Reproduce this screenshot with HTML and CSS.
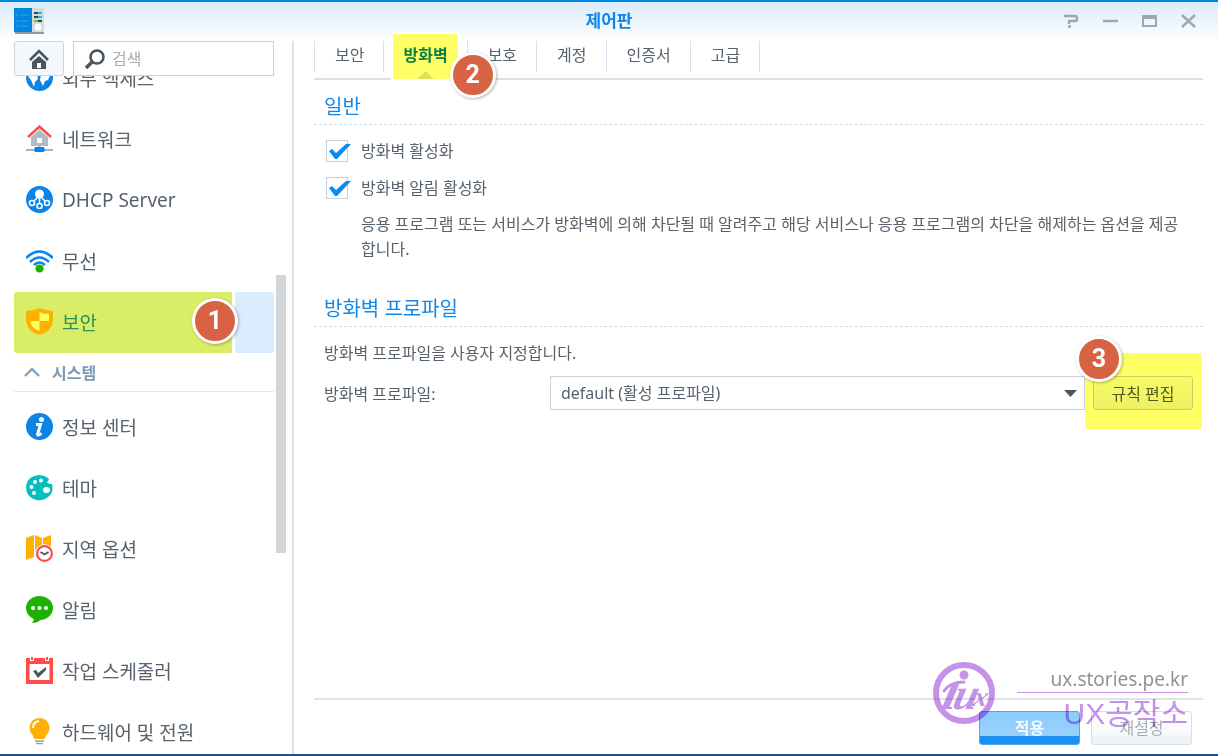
FILE: index.html
```
<!DOCTYPE html>
<html lang="ko">
<head>
    <meta charset="UTF-8">
    <meta name="viewport" content="width=device-width, initial-scale=1.0">
    <title>제어판</title>
    <link rel="stylesheet" href="styles.css">
</head>
<body>

    <div class="window">
        <header class="titlebar">
            <svg class="app-icon" width="30" height="26" viewBox="0 0 30 26">
                <rect x="1" y="2" width="29" height="24" fill="#8d99a3"/>
                <rect x="17" y="0" width="13" height="24" fill="#d3dbe1"/>
                <rect width="18" height="24" fill="#0784e0"/>
                <path d="M2 7h2M6 7h9M2 13h2M6 13h9M2 18h2M6 18h9" stroke="#10b4f5"/>
                <path d="M20 5h4M20 9h4" stroke="#37424b" stroke-width="2"/>
                <path d="M24 5h4M24 9h4" stroke="#1fb5e8" stroke-width="2"/>
                <path d="M20 13h4" stroke="#6ad000" stroke-width="2"/>
                <path d="M24 13h4" stroke="#37424b" stroke-width="2"/>
                <circle cx="24" cy="19" r="3.5" fill="#f5ffff"/>
            </svg>
            <h1>제어판</h1>
            <div class="window-buttons">
                <button type="button" aria-label="도움말">
                    <svg width="15" height="14" viewBox="0 0 15 14" fill="none" stroke="#9ca7b0" stroke-width="2.4"><path d="M0 2h11q2 0 2 2v1q0 2-2 2H5v3M4 12.500h3"/></svg>
                </button>
                <button type="button" aria-label="최소화">
                    <svg width="15" height="14" viewBox="0 0 15 14" stroke="#9ca7b0" stroke-width="2.4"><path d="M0 7h15"/></svg>
                </button>
                <button type="button" aria-label="최대화">
                    <svg width="15" height="14" viewBox="0 0 15 14" fill="none" stroke="#9ca7b0" stroke-width="2"><path d="M1 2h13v10H1z"/><path d="M0 3h15" stroke-width="4"/></svg>
                </button>
                <button type="button" aria-label="닫기">
                    <svg width="15" height="14" viewBox="0 0 15 14" stroke="#9ca7b0" stroke-width="2.4"><path d="M1 1l13 12M14 1L1 13"/></svg>
                </button>
            </div>
        </header>

        <div class="body">
            <aside class="sidebar">
                <div class="toolbar">
                    <button class="home-btn" type="button" aria-label="홈">
                        <svg width="20" height="20" viewBox="0 0 20 20"><path d="M3 13l7-6 7 6v7H3z" fill="#4a555f"/><path d="M8 14h4v5H8z" fill="#fff"/><path d="M1 11l9-9 9 9" fill="none" stroke="#4a555f" stroke-width="2.6"/></svg>
                    </button>
                    <label class="search">
                        <svg width="20" height="20" viewBox="0 0 20 20" fill="none" stroke="#4a555f"><circle cx="12" cy="8" r="6.5" stroke-width="2.6"/><path d="M7 13l-6 6" stroke-width="3.6"/></svg>
                        <input type="text" placeholder="검색" aria-label="검색">
                    </label>
                </div>

                <div class="nav-area">
                    <nav class="nav">
                        <a class="item" href="#">
                            <svg viewBox="0 0 27 27"><circle cx="13.5" cy="13.5" r="13.5" fill="#0b84e6"/><path d="M3 7l8 2 1 6-3 3-1 5-3-7-3-4zM15 10l9 2-2 4-3 1-2 5-3-6z" fill="#fff"/></svg>
                            외부 액세스
                        </a>
                        <a class="item" href="#">
                            <svg viewBox="0 0 27 27"><path d="M5 12l8.5-7.500L22 12v9H5z" fill="#b1bbc4"/><path d="M2 12L13.5 1.500 25 12" fill="none" stroke="#ff4b4b" stroke-width="2.4"/><path d="M11 13h5v5h-5z" fill="#fff"/><path d="M0 25h27M13.5 20v4" stroke="#a8b3bd" stroke-width="2"/><rect x="8.5" y="22" width="10" height="5" rx="1" fill="#0b84e6"/></svg>
                            네트워크
                        </a>
                        <a class="item" href="#">
                            <svg viewBox="0 0 27 27"><circle cx="13.5" cy="13.5" r="13.5" fill="#0b84e6"/><circle cx="13.5" cy="8" r="4.5" fill="#fff"/><g fill="none" stroke="#fff" stroke-width="1.6"><path d="M12 11l-4 4M15 11l4 4M13.5 12v5"/><circle cx="6" cy="17" r="2.5"/><circle cx="13.5" cy="20" r="2.5"/><circle cx="21" cy="17" r="2.5"/></g></svg>
                            DHCP Server
                        </a>
                        <a class="item" href="#">
                            <svg viewBox="0 0 27 27"><g fill="none" stroke="#0b84e6" stroke-width="2.6"><path d="M0 11q13.5-13 27 0M4 15q9.500-9 19 0M8 18q5.500-5 11 0"/></g><circle cx="13.5" cy="21.5" r="4" fill="#1db100"/></svg>
                            무선
                        </a>
                        <a class="item selected" href="#">
                            <svg viewBox="0 0 27 27"><path d="M0 3q7 0 13.500-3Q20 3 27 3v10q-1 10-13.500 14Q1 23 0 13z" fill="#ffb000"/><path d="M13.5 4q4 2 9.500 2v7h-9.500zM4 13h9.500v10Q5 20 4 13z" fill="#ffff66"/></svg>
                            보안
                            <span class="badge badge-1">1</span>
                        </a>
                        <button class="group" type="button">
                            <svg width="16" height="10" viewBox="0 0 16 10" fill="none" stroke="#86a3ba" stroke-width="2.4"><path d="M1 9l7-7 7 7"/></svg>
                            시스템
                        </button>
                        <a class="item" href="#">
                            <svg viewBox="0 0 27 27"><circle cx="13.5" cy="13.5" r="13.5" fill="#0b84e6"/><circle cx="15.5" cy="6.5" r="2.5" fill="#fff"/><path d="M10 11.500h4.500l-3 10q0 1.500 4-1" fill="none" stroke="#fff" stroke-width="3"/></svg>
                            정보 센터
                        </a>
                        <a class="item" href="#">
                            <svg viewBox="0 0 27 27"><path d="M13 1q5 0 9 3 2 2-1 4 1 2 5 2 2 9-4 13-5 4-12 3Q0 23 0 13 1 2 13 1z" fill="#04bec0"/><g fill="#fff"><circle cx="15" cy="6.5" r="2"/><circle cx="9" cy="8" r="2"/><circle cx="5.5" cy="13" r="2"/><circle cx="8" cy="19" r="2"/><ellipse cx="20.5" cy="16" rx="3.5" ry="3"/></g></svg>
                            테마
                        </a>
                        <a class="item" href="#">
                            <svg viewBox="0 0 27 27"><path d="M0 3l8-3v22l-8 3zM9 0l7 3v21l-7-2zM17 3l8-3v22l-8 2z" fill="#ffb000"/><circle cx="18.5" cy="18.5" r="9.5" fill="#fff"/><circle cx="18.5" cy="18.5" r="7.4" fill="#fff" stroke="#ff4b4b" stroke-width="2.2"/><path d="M14.5 17l4 2.500 4-2.500" fill="none" stroke="#4a555f" stroke-width="1.8"/></svg>
                            지역 옵션
                        </a>
                        <a class="item" href="#">
                            <svg viewBox="0 0 27 27"><ellipse cx="13.5" cy="12" rx="13.5" ry="12" fill="#1db100"/><path d="M7 20q2 4-1 7 7 0 10-5z" fill="#1db100"/><g fill="#fff"><circle cx="7" cy="12" r="2"/><circle cx="13.5" cy="12" r="2"/><circle cx="20" cy="12" r="2"/></g></svg>
                            알림
                        </a>
                        <a class="item" href="#">
                            <svg viewBox="0 0 27 27"><path d="M0 1h27v26H0z" fill="#ff4b4b"/><path d="M3.5 7h20v16h-20z" fill="#fff"/><path d="M4 0h4v4H4zM19 0h4v4h-4z" fill="#fff"/><path d="M5 0h2v3H5zM20 0h2v3h-2z" fill="#ff4b4b"/><path d="M7 14l3-1 2 3 8-6v3l-8 8z" fill="#4a555f"/></svg>
                            작업 스케줄러
                        </a>
                        <a class="item" href="#">
                            <svg viewBox="0 0 27 27"><path d="M13.5 0q9 0 10 10 0 4-3 7l-2 4h-10l-2-4q-3-3-3-7 1-10 10-10z" fill="#ffb000"/><path d="M7 10q0-6 6-7" fill="none" stroke="#fff" stroke-width="2"/><path d="M9 23h9M10 25.500h7" stroke="#96a1ab" stroke-width="1.6"/></svg>
                            하드웨어 및 전원
                        </a>
                    </nav>
                    <div class="scrollbar"><div class="thumb"></div></div>
                </div>
            </aside>

            <main class="main">
                <nav class="tabs">
                    <a class="tab" href="#">보안</a>
                    <a class="tab active" href="#"><span class="tab-label">방화벽</span><span class="badge badge-2">2</span></a>
                    <a class="tab" href="#">보호</a>
                    <a class="tab" href="#">계정</a>
                    <a class="tab" href="#">인증서</a>
                    <a class="tab" href="#">고급</a>
                </nav>

                <form class="content">
                    <section class="section">
                        <h2>일반</h2>
                        <label class="check"><input type="checkbox" checked> 방화벽 활성화</label>
                        <label class="check"><input type="checkbox" checked> 방화벽 알림 활성화</label>
                        <p class="help">응용 프로그램 또는 서비스가 방화벽에 의해 차단될 때 알려주고 해당 서비스나 응용 프로그램의 차단을 해제하는 옵션을 제공합니다.</p>
                    </section>

                    <section class="section">
                        <h2>방화벽 프로파일</h2>
                        <p class="desc">방화벽 프로파일을 사용자 지정합니다.</p>
                        <div class="field">
                            <label for="profile">방화벽 프로파일:</label>
                            <select id="profile">
                                <option>default (활성 프로파일)</option>
                            </select>
                            <div class="edit">
                                <button class="edit-btn" type="button">규칙 편집</button>
                                <span class="badge badge-3">3</span>
                            </div>
                        </div>
                    </section>
                </form>

                <footer class="footer">
                    <button class="btn apply" type="button">적용</button>
                    <button class="btn reset" type="button">재설정</button>
                </footer>
            </main>
        </div>

        <div class="watermark">
            <svg class="logo" width="62" height="62" viewBox="0 0 62 62">
                <circle cx="31" cy="31" r="28" fill="none" stroke="#c592e8" stroke-width="6"/>
                <circle cx="31" cy="13" r="4.5" fill="#c592e8"/>
                <path d="M11 29Q17 20 31 20" fill="none" stroke="#c592e8" stroke-width="3" stroke-linecap="round"/>
                <g fill="#c592e8" font-family="Liberation Serif, serif" font-style="italic" font-weight="bold" transform="translate(9 0) skewX(-14)">
                    <text x="10" y="47" font-size="54">ı</text>
                    <text x="21" y="47" font-size="44">u</text>
                    <text x="41" y="44" font-size="28">x</text>
                </g>
            </svg>
            <div class="site">
                <span class="url">ux.stories.pe.kr</span>
                <span class="name">UX공작소</span>
            </div>
        </div>
    </div>

</body>
</html>
```
FILE: styles.css
```
/* General Reset */
* {
    margin: 0;
    padding: 0;
    box-sizing: border-box;
}

body {
    font-family: "Noto Sans", "Noto Sans CJK KR", sans-serif;
    font-size: 16px;
    color: #58626c;
    background: #fff;
}

button,
input,
select {
    font: inherit;
    color: inherit;
}

button {
    cursor: pointer;
}

a {
    color: inherit;
    text-decoration: none;
}

.window {
    position: relative;
    display: flex;
    flex-direction: column;
    height: 100vh;
    overflow: hidden;
    border-top: 2px solid #0086e5;
    border-bottom: 2px solid #1d4f91;
}

/* Title bar */
.titlebar {
    display: grid;
    grid-template-columns: 1fr auto 1fr;
    align-items: center;
    height: 39px;
    padding: 0 14px 2px;
    background: linear-gradient(#d9ebfb, #fff);
}

h1 {
    font-size: 17px;
    line-height: 24px;
    color: #0f86e8;
}

.window-buttons {
    display: flex;
    justify-content: flex-end;
    gap: 8px;
}

.window-buttons button {
    display: flex;
    align-items: center;
    justify-content: center;
    width: 31px;
    height: 24px;
    border: none;
    background: none;
}

.body {
    display: flex;
    flex: 1;
    min-height: 0;
}

/* Sidebar */
.sidebar {
    display: flex;
    flex-direction: column;
    flex: none;
    width: 294px;
    padding-left: 14px;
    border-right: 2px solid #dfe1e3;
}

.toolbar {
    position: relative;
    z-index: 1;
    display: flex;
    gap: 9px;
    margin-right: 18px;
    height: 35px;
    background: #fff;
}

.home-btn {
    display: flex;
    align-items: center;
    justify-content: center;
    flex: none;
    width: 50px;
    border: 1px solid #cbd6e0;
    border-radius: 3px;
    background: #f4f8fc;
}

.search {
    display: flex;
    align-items: center;
    flex: 1;
    gap: 7px;
    min-width: 0;
    padding-left: 11px;
    border: 1px solid #c5d1dc;
}

.search svg {
    flex: none;
}

.search input {
    width: 100%;
    min-width: 0;
    border: none;
    outline: none;
    background: none;
}

.search input::placeholder {
    color: #a5adb5;
}

.nav-area {
    display: flex;
    flex: 1;
    gap: 2px;
    min-height: 0;
    overflow: hidden;
}

.nav {
    flex: 1;
    margin-top: -28px;
}

.item {
    display: flex;
    align-items: center;
    gap: 9px;
    height: 61px;
    padding: 0 0 2px 12px;
    font-size: 19px;
}

.item svg {
    width: 27px;
    height: 27px;
}

.item.selected {
    position: relative;
    color: #2f9058;
    border-radius: 3px;
    background: linear-gradient(90deg, #d9ed66 84%, #fff 84%, #fff 85%, #d9edff 85%);
}

.group {
    display: flex;
    align-items: center;
    gap: 12px;
    width: 100%;
    height: 39px;
    margin-bottom: 5px;
    padding: 0 0 0 10px;
    border: none;
    border-bottom: 1px solid #e1ebf3;
    background: none;
    font-weight: bold;
    color: #7b9ab5;
}

.scrollbar {
    display: grid;
    grid-template-rows: 199fr 278fr 201fr;
    width: 10px;
    margin-right: 6px;
}

.thumb {
    grid-row: 2;
    background: #d4d5d7;
}

/* Main panel */
.main {
    display: flex;
    flex-direction: column;
    flex: 1;
    min-width: 0;
    padding: 0 15px 0 20px;
}

.tabs {
    display: flex;
    height: 39px;
    border-bottom: 2px solid #dfe0e1;
}

.tab {
    height: 31px;
    padding: 0 19px 0 20px;
    line-height: 28px;
    border-left: 1px solid #d5e0ee;
}

.tab:last-child {
    border-right: 1px solid #d5e0ee;
}

.tab.active {
    position: relative;
    padding: 0 9px;
    font-weight: bold;
    color: #0b8045;
}

.tab-label {
    display: block;
    height: 45px;
    margin-top: -7px;
    padding: 7px 10px 0;
    background: #ffff66;
    box-shadow: 0 0 0 2px #fff;
}

/* notch under the active tab */
.tab-label::after {
    content: "";
    display: block;
    width: 16px;
    height: 8px;
    margin: 2px auto 0;
    background: #dede58;
    clip-path: polygon(50% 0, 100% 100%, 0 100%);
}

.badge {
    position: absolute;
    z-index: 2;
    width: 46px;
    height: 46px;
    border: 3px solid #fff;
    border-radius: 50%;
    background: #d86344;
    box-shadow: 1px 1px 3px rgba(0, 0, 0, 0.3);
    font-family: Roboto, sans-serif;
    font-size: 25px;
    font-weight: bold;
    line-height: 39px;
    text-align: center;
    color: #fff;
}

.badge-1 {
    top: 6px;
    left: 178px;
}

.badge-2 {
    top: 11px;
    right: -29px;
}

.badge-3 {
    top: -17px;
    left: -9px;
}

.content {
    flex: 1;
}

h2 {
    margin-top: 10px;
    padding-left: 10px;
    font-size: 20px;
    font-weight: normal;
    line-height: 34px;
    color: #1088ea;
    border-bottom: 1px dashed #cfdeee;
}

.section + .section h2 {
    margin-top: 30px;
}

.check {
    display: flex;
    align-items: center;
    gap: 13px;
    width: fit-content;
    height: 22px;
    margin: 15px 0 0 12px;
    line-height: 22px;
}

.check input {
    appearance: none;
    position: relative;
    width: 22px;
    height: 22px;
    border: 1px solid #c3d1de;
}

.check input:checked::after {
    content: "";
    position: absolute;
    top: 0;
    left: 0;
    width: 24px;
    height: 20px;
    background: #0a8bf0;
    clip-path: polygon(2px 10px, 5px 8px, 9px 12px, 19px 3px, 24px 3px, 10px 18px, 8px 18px);
}

.help {
    margin: 13px 20px 0 47px;
    line-height: 25px;
}

.desc {
    margin: 14px 10px 0;
    line-height: 24px;
}

.field {
    display: flex;
    align-items: center;
    height: 34px;
    margin: 11px 10px 0;
}

.field label {
    width: 226px;
}

.field select {
    appearance: none;
    flex: 1;
    min-width: 0;
    height: 34px;
    padding: 0 10px;
    border: 1px solid #c5d1dc;
    border-radius: 0;
    background: #fff url("data:image/svg+xml,%3Csvg xmlns='http://www.w3.org/2000/svg' width='13' height='7'%3E%3Cpath d='M0 0h13L6.5 7z' fill='%234a555f'/%3E%3C/svg%3E") no-repeat right 7px center;
}

.edit {
    position: relative;
    margin: -23px -9px -19px 0;
    padding: 23px 9px 19px 8px;
    background: #ffff66;
}

.edit-btn {
    display: block;
    width: 100px;
    height: 34px;
    border: 1px solid #cbd05e;
    border-radius: 3px;
    background: linear-gradient(#f8fb65, #ecf163);
    color: #505a28;
}

/* Footer */
.footer {
    display: flex;
    justify-content: flex-end;
    gap: 11px;
    padding: 11px 11px 9px;
    border-top: 2px solid #e2e3e4;
}

.btn {
    width: 101px;
    height: 34px;
    padding-bottom: 2px;
    border-radius: 3px;
}

.apply {
    border: 1px solid #4aaaf4;
    background: linear-gradient(#8ccbfd, #98d1fc 76%, #1a90f0 76%);
    font-weight: bold;
    color: #f4faff;
}

.reset {
    border: 1px solid #d5e0e9;
    background: linear-gradient(#fff, #f5f8fa 76%, #edf2f6 76%);
    color: #a6adb4;
}

.watermark {
    position: absolute;
    right: 30px;
    bottom: 19px;
    z-index: 3;
    display: flex;
    gap: 22px;
    mix-blend-mode: multiply;
    pointer-events: none;
}

.logo {
    margin-top: -4px;
}

.site {
    display: flex;
    flex-direction: column;
    width: 171px;
    text-align: right;
}

.url {
    font-size: 19px;
    line-height: 26px;
    color: #909295;
    border-bottom: 1px solid #c592e8;
}

.name {
    font-family: "Liberation Sans", "Noto Sans CJK KR", sans-serif;
    font-size: 30px;
    line-height: 42px;
    color: #c592e8;
}
```
